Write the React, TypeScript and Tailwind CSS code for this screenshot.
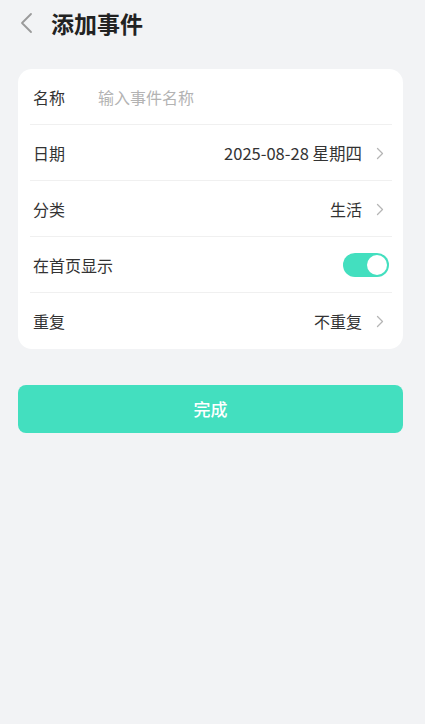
import React from "react";

const Chevron = () => (
  <svg width="8" height="13" viewBox="0 0 8 13" fill="none" className="ml-[14px]">
    <path d="M1.5 1.5L6.5 6.5L1.5 11.5" stroke="#b5b5b5" strokeWidth="1.3" strokeLinecap="round" strokeLinejoin="round" />
  </svg>
);

const Row = ({ children, last }: { children: React.ReactNode; last?: boolean }) => (
  <div className="relative h-[56px] flex items-center pl-[15px] pr-[19px]">
    {children}
    {!last && <div className="absolute left-[12px] right-[11px] bottom-0 h-px bg-[#f0f0f0]" />}
  </div>
);

export default function App() {
  return (
    <div
      className="w-[425px] h-[724px] bg-[#f2f3f5] text-[#333]"
      style={{ fontFamily: '"Noto Sans CJK SC", "Noto Sans", sans-serif' }}
    >
      <div className="h-[46px] flex items-center pl-[20px]">
        <svg width="13" height="22" viewBox="0 0 13 22" fill="none">
          <path d="M11 2L2 11L11 20" stroke="#9a9a9a" strokeWidth="1.8" strokeLinecap="round" strokeLinejoin="round" />
        </svg>
        <span className="ml-[18px] text-[23px] font-bold text-[#222] leading-none">添加事件</span>
      </div>
      <div className="ml-[18px] mt-[23px] w-[385px] bg-white rounded-[14px]">
        <Row>
          <span className="text-[16px] text-[#333] w-[65px]">名称</span>
          <span className="text-[16px] text-[#b3b3b3]">输入事件名称</span>
        </Row>
        <Row>
          <span className="text-[16px] flex-1">日期</span>
          <span className="text-[16.5px] text-[#333]">2025-08-28 星期四</span>
          <Chevron />
        </Row>
        <Row>
          <span className="text-[16px] flex-1">分类</span>
          <span className="text-[16px]">生活</span>
          <Chevron />
        </Row>
        <Row>
          <span className="text-[16px] flex-1">在首页显示</span>
          <div className="w-[46px] h-[24px] rounded-full bg-[#43dfbf] flex items-center justify-end pr-[2px] -mr-[5px]">
            <div className="w-[20px] h-[20px] rounded-full bg-white" />
          </div>
        </Row>
        <Row last>
          <span className="text-[16px] flex-1">重复</span>
          <span className="text-[16px]">不重复</span>
          <Chevron />
        </Row>
      </div>
      <button className="ml-[18px] mt-[36px] w-[385px] h-[48px] rounded-[8px] bg-[#43dfbf] text-white text-[17px] font-medium flex items-center justify-center">
        完成
      </button>
    </div>
  );
}
